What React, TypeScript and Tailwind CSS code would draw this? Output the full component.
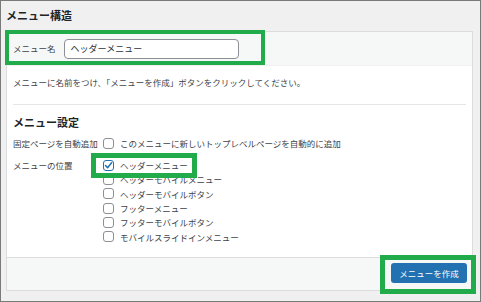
import React from "react";

const items = [
  "ヘッダーメニュー",
  "ヘッダーモバイルメニュー",
  "ヘッダーモバイルボタン",
  "フッターメニュー",
  "フッターモバイルボタン",
  "モバイルスライドインメニュー",
];

function Box({ checked }: { checked?: boolean }) {
  return (
    <span
      className={
        checked
          ? "flex w-[11px] h-[11px] shrink-0 items-center justify-center rounded-[3px] border border-[#2271b1] bg-white"
          : "flex w-[11px] h-[11px] shrink-0 items-center justify-center rounded-[3px] border border-[#8c8f94] bg-white"
      }
    >
      {checked ? (
        <svg width="9" height="9" viewBox="0 0 9 9">
          <path d="M1.5 4.6 L3.6 6.8 L7.6 1.8" fill="none" stroke="#2271b1" strokeWidth="1.5" strokeLinecap="round" strokeLinejoin="round" />
        </svg>
      ) : null}
    </span>
  );
}

export default function App() {
  return (
    <div
      className="relative w-[481px] h-[302px] overflow-hidden border border-[#7a7a7a] bg-[#f0f0f1] text-[#3c434a]"
      style={{ fontFamily: '"Noto Sans CJK JP", "Noto Sans", sans-serif' }}
    >
      <div className="h-[30px] pl-[5px] pt-[7px] text-[11px] leading-[14px] font-bold text-[#1d2327]">メニュー構造</div>
      <div className="ml-[5px] w-[467px] h-[260px] flex flex-col border border-[#dcdcde] bg-white">
        <div className="h-[34px] flex items-center gap-[8px] pl-[6px] bg-[#f6f7f7] border-b border-[#f0f0f1] text-[8.5px]">
          <span>メニュー名</span>
          <div className="w-[175px] h-[20px] flex items-center pl-[6px] rounded-[4px] border border-[#8c8f94] bg-white text-[9px] text-[#2c3338]">
            ヘッダーメニュー
          </div>
        </div>
        <div className="flex-1 px-[6px] pt-[9px] text-[8.5px] leading-[14px]">
          <div>メニューに名前をつけ、「メニューを作成」ボタンをクリックしてください。</div>
          <div className="mt-[15px] border-t border-[#e6e6e6]" />
          <div className="mt-[10px] text-[11px] leading-[14px] font-bold text-[#1d2327]">メニュー設定</div>
          <div className="mt-[7px] flex items-center h-[14px]">
            <span className="w-[90px] shrink-0">固定ページを自動追加</span>
            <Box />
            <span className="ml-[6px]">このメニューに新しいトップレベルページを自動的に追加</span>
          </div>
          <div className="mt-[8px] flex">
            <span className="w-[90px] shrink-0 leading-[14.3px]">メニューの位置</span>
            <div className="flex flex-col">
              {items.map((t, i) => (
                <div key={t} className="flex items-center h-[14.3px]">
                  <Box checked={i === 0} />
                  <span className="ml-[6px]">{t}</span>
                </div>
              ))}
            </div>
          </div>
        </div>
        <div className="h-[33px] flex justify-end items-start pt-[5px] pr-[5px] bg-[#f6f7f7] border-t border-[#dcdcde]">
          <div className="w-[76px] h-[20px] flex items-center justify-center rounded-[3px] bg-[#2271b1] text-white text-[8.5px]">
            メニューを作成
          </div>
        </div>
      </div>
      <div className="absolute left-[4px] top-[29px] w-[260px] h-[35px] border-[4px] border-[#22ab4a]" />
      <div className="absolute left-[90px] top-[152px] w-[106px] h-[25px] border-[5px] border-[#22ab4a]" />
      <div className="absolute left-[379px] top-[254px] w-[96px] h-[39px] border-[5px] border-[#22ab4a]" />
    </div>
  );
}
